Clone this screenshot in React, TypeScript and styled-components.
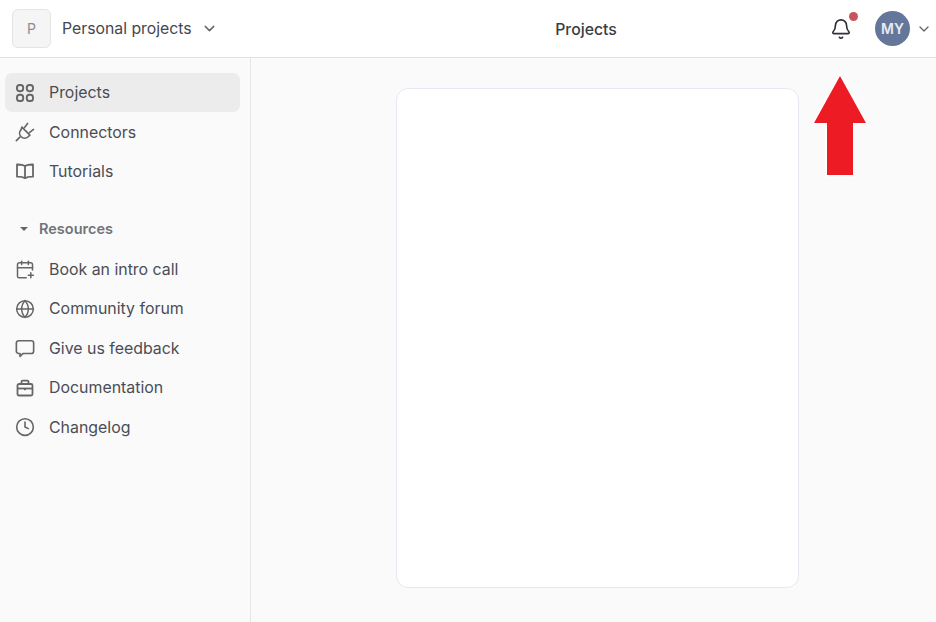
import styled, { createGlobalStyle } from "styled-components";
import { Bell, CalendarPlus, ChevronDown, Clock, Globe } from "lucide-react";
import type { ReactNode } from "react";

const GlobalStyle = createGlobalStyle`
  html, body { margin: 0; height: 100%; }
  body {
    background: #fafafa;
    font-family: Inter, "Noto Sans", sans-serif;
    color: #44474f;
    overflow: hidden;
  }
`;

const ProjectsIcon = () => (
  <svg width="20" height="20" viewBox="0 0 20 20" fill="none" stroke="#666" strokeWidth="1.9">
    <rect x="2" y="2" width="6.2" height="6.2" rx="2.6" />
    <rect x="11.8" y="2" width="6.2" height="6.2" rx="2.6" />
    <rect x="2" y="11.8" width="6.2" height="6.2" rx="2.6" />
    <rect x="11.8" y="11.8" width="6.2" height="6.2" rx="2.6" />
  </svg>
);

const PlugIcon = () => (
  <svg width="22" height="22" viewBox="0 0 22 22" fill="none" stroke="#666" strokeWidth="1.8" strokeLinecap="round" strokeLinejoin="round">
    <path d="M1.5 20.5l3.8-3.8" />
    <path d="M7.6 5.6l8.8 8.8-1.9 1.8c-2.3 2.2-5.6 2.2-7.8 0-2.2-2.2-2.2-5.5 0-7.8z" />
    <path d="M10.4 6.2l3.4-4.6" />
    <path d="M15.8 11.6l4.6-3.4" />
  </svg>
);

const BookIcon = () => (
  <svg width="20" height="20" viewBox="0 0 20 20" fill="none" stroke="#666" strokeWidth="1.8" strokeLinejoin="round">
    <path d="M10 5c-1.6-1-3.8-1.6-8-1.5v12.2c4.2-.1 6.4.4 8 1.5 1.6-1.1 3.8-1.6 8-1.5V3.500C13.800 3.400 11.600 4 10 5z" />
    <path d="M10 5v12" />
  </svg>
);

const BubbleIcon = () => (
  <svg width="22" height="22" viewBox="0 0 22 22" fill="none" stroke="#666" strokeWidth="1.8" strokeLinejoin="round">
    <path d="M4 3h14a2.500 2.500 0 0 1 2.500 2.500v9A2.500 2.500 0 0 1 18 17H9l-3.500 3.200V17H4a2.500 2.500 0 0 1-2.500-2.500v-9A2.500 2.500 0 0 1 4 3z" />
  </svg>
);

const CaseIcon = () => (
  <svg width="20" height="20" viewBox="0 0 20 20" fill="none" stroke="#666" strokeWidth="1.8" strokeLinejoin="round">
    <rect x="2.500" y="6" width="15" height="11.500" rx="1.500" />
    <path d="M6.500 6V3.800c0-.7.5-1.200 1.200-1.200h4.600c.7 0 1.200.5 1.200 1.200V6" />
    <path d="M2.500 10.500h15" />
    <path d="M10 10v2.200" />
  </svg>
);

const ArrowIcon = () => (
  <svg width="60" height="106" viewBox="0 0 60 106">
    <path
      d="M30 2 L56 49 H43 V101 H17 V49 H4 Z"
      fill="#ed1c24"
      stroke="#fff"
      strokeWidth="3"
      paintOrder="stroke"
    />
  </svg>
);

const Page = styled.div`
  width: 936px;
  height: 622px;
  display: flex;
  flex-direction: column;
  position: relative;
  overflow: hidden;
`;

const Header = styled.header`
  height: 57px;
  flex-shrink: 0;
  background: #fff;
  border-bottom: 1px solid #e2e2e4;
  display: flex;
  align-items: center;
  padding: 0 4px 0 12px;
`;

const Workspace = styled.div`
  width: 238px;
  display: flex;
  align-items: center;
`;

const WorkspaceBadge = styled.div`
  width: 39px;
  height: 39px;
  box-sizing: border-box;
  border: 1px solid #e4e4e6;
  border-radius: 6px;
  background: #f5f5f5;
  color: #8a8d94;
  font-size: 14px;
  display: flex;
  align-items: center;
  justify-content: center;
`;

const WorkspaceName = styled.span`
  font-size: 15.8px;
  margin: 0 9px 0 11px;
`;

const PageTitle = styled.h1`
  flex: 1;
  margin: 0;
  padding: 1px 0 0 92px;
  text-align: center;
  font-size: 15.8px;
  font-weight: 500;
  color: #3a3d44;
`;

const HeaderActions = styled.div`
  display: flex;
  align-items: center;
`;

const BellButton = styled.div`
  position: relative;
  display: flex;
  margin-right: 23px;
  color: #2f3136;
`;

const BellDot = styled.span`
  position: absolute;
  top: -6px;
  right: -6px;
  width: 9px;
  height: 9px;
  border-radius: 50%;
  background: #c9555b;
`;

const Avatar = styled.div`
  width: 35px;
  height: 35px;
  border-radius: 50%;
  background: #64779a;
  color: #e8ebf2;
  font-size: 14px;
  font-weight: 600;
  display: flex;
  align-items: center;
  justify-content: center;
  margin-right: 6px;
`;

const Body = styled.div`
  flex: 1;
  display: flex;
  min-height: 0;
`;

const Sidebar = styled.nav`
  width: 251px;
  flex-shrink: 0;
  box-sizing: border-box;
  border-right: 1px solid #e6e6e8;
  background: #fafafa;
  padding: 15px 10px 0 5px;
`;

const NavItem = styled.div<{ $active?: boolean }>`
  height: 39.4px;
  box-sizing: border-box;
  display: flex;
  align-items: center;
  padding-left: 10px;
  border-radius: 7px;
  font-size: 15.9px;
  color: #4a4d55;
  background: ${({ $active }) => ($active ? "#ececec" : "transparent")};
`;

const NavIcon = styled.span`
  width: 20px;
  height: 22px;
  margin-right: 14px;
  display: flex;
  align-items: center;
  justify-content: center;
  color: #666;
`;

const SectionTitle = styled.div`
  display: flex;
  align-items: center;
  margin: 27.6px 0 11px 15px;
  height: 20px;
  font-size: 14.5px;
  font-weight: 600;
  color: #70737a;
`;

const Caret = styled.span`
  width: 0;
  height: 0;
  border-left: 4px solid transparent;
  border-right: 4px solid transparent;
  border-top: 4px solid #666;
  margin-right: 11px;
`;

const Content = styled.main`
  flex: 1;
  display: flex;
  justify-content: center;
  padding: 30px 0 35px 8px;
  box-sizing: border-box;
`;

const Card = styled.div`
  width: 403px;
  height: 500px;
  box-sizing: border-box;
  background: #fff;
  border: 1px solid #e6e9f2;
  border-radius: 12px;
`;

const Annotation = styled.div`
  position: absolute;
  left: 810px;
  top: 74px;
  display: flex;
`;

const Item = ({ icon, label, active }: { icon: ReactNode; label: string; active?: boolean }) => (
  <NavItem $active={active}>
    <NavIcon>{icon}</NavIcon>
    {label}
  </NavItem>
);

export default function App() {
  return (
    <Page>
      <GlobalStyle />
      <Header>
        <Workspace>
          <WorkspaceBadge>P</WorkspaceBadge>
          <WorkspaceName>Personal projects</WorkspaceName>
          <ChevronDown size={17} color="#666" />
        </Workspace>
        <PageTitle>Projects</PageTitle>
        <HeaderActions>
          <BellButton>
            <Bell size={22} strokeWidth={1.8} />
            <BellDot />
          </BellButton>
          <Avatar>MY</Avatar>
          <ChevronDown size={16} color="#666" />
        </HeaderActions>
      </Header>
      <Body>
        <Sidebar>
          <Item active icon={<ProjectsIcon />} label="Projects" />
          <Item icon={<PlugIcon />} label="Connectors" />
          <Item icon={<BookIcon />} label="Tutorials" />
          <SectionTitle>
            <Caret />
            Resources
          </SectionTitle>
          <Item icon={<CalendarPlus size={21} strokeWidth={1.8} />} label="Book an intro call" />
          <Item icon={<Globe size={22} strokeWidth={1.8} />} label="Community forum" />
          <Item icon={<BubbleIcon />} label="Give us feedback" />
          <Item icon={<CaseIcon />} label="Documentation" />
          <Item icon={<Clock size={22} strokeWidth={1.9} />} label="Changelog" />
        </Sidebar>
        <Content>
          <Card />
        </Content>
      </Body>
      <Annotation>
        <ArrowIcon />
      </Annotation>
    </Page>
  );
}
